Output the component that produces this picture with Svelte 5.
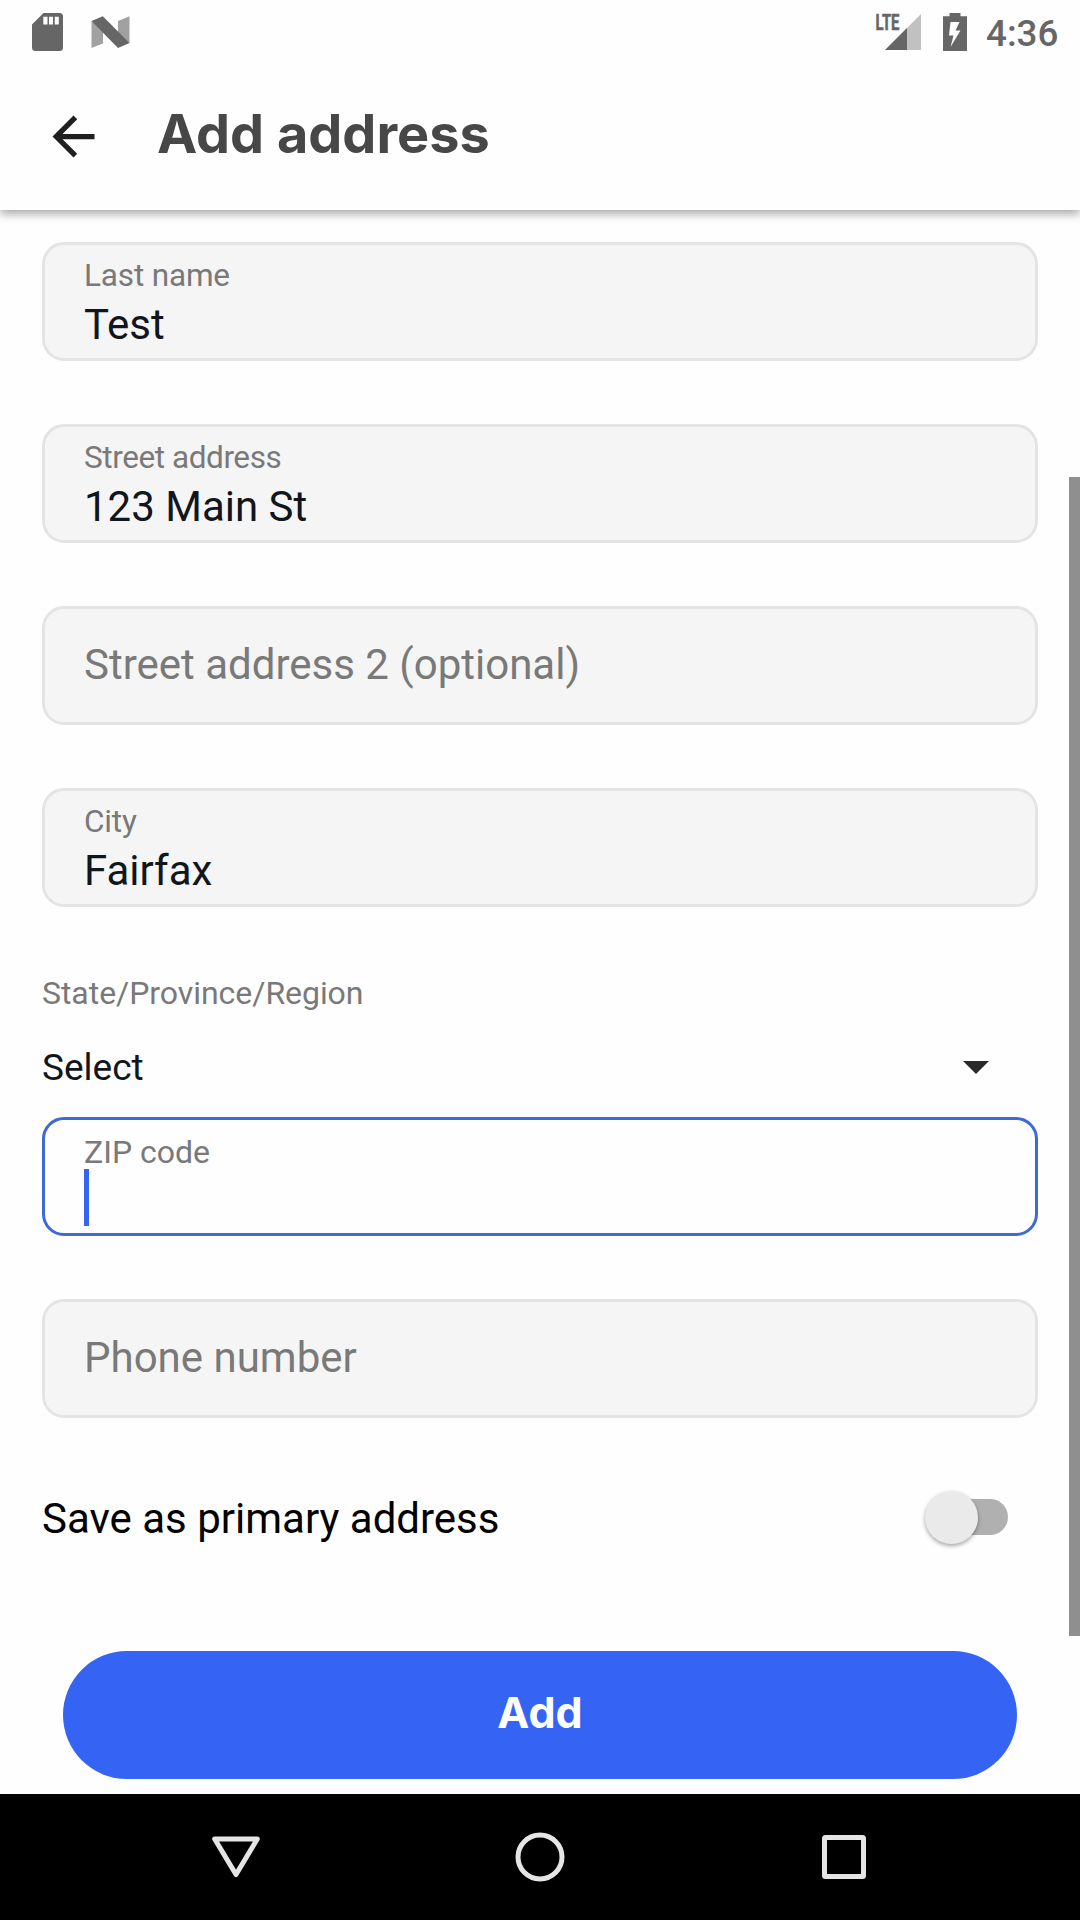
<script>
  const fields = [
    { label: 'Last name', value: 'Test' },
    { label: 'Street address', value: '123 Main St', tight: true },
    { label: 'Street address 2 (optional)', value: '' },
    { label: 'City', value: 'Fairfax' },
  ];
</script>

{#snippet field(item)}
  <div class="field">
    {#if item.value}
      <span class="label" class:tight={item.tight}>{item.label}</span>
      <span class="value">{item.value}</span>
    {:else}
      <span class="placeholder">{item.label}</span>
    {/if}
  </div>
{/snippet}

<div class="screen">
  <header>
    <div class="status">
      <svg class="sd" viewBox="0 0 31 38" width="31" height="38">
        <path fill="#666" fill-rule="evenodd" d="M11.5 0H27.5Q31 0 31 3.5V34.5Q31 38 27.5 38H3.5Q0 38 0 34.5V11.5ZM11.3 3.8V11.5H15.5V3.8ZM17 3.8V11.5H21V3.8ZM22.7 3.8V11.5H26.8V3.8Z" />
      </svg>
      <svg class="nougat" viewBox="0 0 39 32" width="39" height="32">
        <path fill="#a1a1a1" d="M.5 5V32L12 27.5V15ZM27 5L38.5.3V27L27 17Z" />
        <path fill="#666" d="M.5 5L11.8.3L38.5 27L27 32Z" />
      </svg>
      <span class="grow"></span>
      <svg class="signal" viewBox="0 -6 48 50" width="48" height="50">
        <path fill="#c1c1c1" d="M46 1V37H10Z" />
        <path fill="#666" d="M32 15V37H10Z" />
        <text x="0.5" y="16.5" textLength="24" lengthAdjust="spacingAndGlyphs">LTE</text>
      </svg>
      <svg class="battery" viewBox="0 0 24 38" width="24" height="38">
        <path fill="#666" fill-rule="evenodd" d="M6.5 0H17.5V3.3H24V38H0V3.3H6.5ZM7.5 9L6 22.5H10.5L7.5 34L17.5 17.5H12.5L16.5 9Z" />
      </svg>
      <span class="time">4:36</span>
    </div>
    <div class="bar">
      <svg viewBox="0 0 24 24" width="63" height="63">
        <path fill="#1f1f1f" d="M20 11H7.83l5.59-5.59L12 4l-8 8 8 8 1.41-1.41L7.83 13H20v-2z" />
      </svg>
      <h1>Add address</h1>
    </div>
  </header>

  <main>
    <div class="fields">
      {#each fields as item}
        {@render field(item)}
      {/each}
    </div>
    <div class="region">State/Province/Region</div>
    <div class="select">
      <span>Select</span>
      <svg viewBox="0 0 26 13" width="26" height="13"><path fill="#292929" d="M0 0H26L13 13Z" /></svg>
    </div>
    <div class="field focused">
      <span class="label">ZIP code</span>
      <span class="cursor"></span>
    </div>
    <div class="phone">{@render field({ label: 'Phone number', value: '' })}</div>
    <div class="primary">
      <span class="caption">Save as primary address</span>
      <span class="switch"><span class="thumb"></span></span>
    </div>
    <button>Add</button>
    <div class="scrollbar"></div>
  </main>

  <nav>
    <svg viewBox="0 0 50 50" width="50" height="50">
      <path d="M3.7 7H46.3L25 42.5Z" stroke-linejoin="round" />
    </svg>
    <svg viewBox="0 0 50 50" width="50" height="50"><circle cx="25" cy="25" r="22" /></svg>
    <svg viewBox="0 0 50 50" width="50" height="50">
      <rect x="5.5" y="5.5" width="39" height="39" rx="1" />
    </svg>
  </nav>
</div>

<style>
  :global(body) {
    margin: 0;
    background: #fefefe;
  }
  .screen {
    width: 1080px;
    height: 1920px;
    display: flex;
    flex-direction: column;
    overflow: hidden;
    background: #fefefe;
    font-family: Roboto, sans-serif;
  }
  .screen * {
    box-sizing: border-box;
  }
  svg {
    display: block;
    flex: none;
  }
  header {
    height: 210px;
    flex: none;
    background: #fefefe;
    box-shadow: 0 4px 9px rgba(0, 0, 0, 0.34);
    z-index: 1;
  }
  .status {
    height: 63px;
    display: flex;
    align-items: center;
    padding: 0 21px 0 32px;
  }
  .nougat {
    margin-left: 28px;
  }
  .grow {
    flex: 1;
  }
  .signal {
    margin-right: 20px;
  }
  .signal text {
    font: 700 21.5px Roboto, sans-serif;
    fill: #666;
    stroke: #666;
    stroke-width: 0.5px;
  }
  .time {
    margin-left: 19px;
    width: 73px;
    font-size: 36.75px;
    font-weight: 500;
    line-height: 43px;
    padding-top: 4px;
    color: #666;
  }
  .bar {
    height: 147px;
    display: flex;
    align-items: center;
    padding-left: 42px;
  }
  h1 {
    margin: 0 0 6px 52px;
    font: 700 54px/64px Inter, sans-serif;
    color: #474747;
  }
  main {
    position: relative;
    flex: 1;
    padding: 32px 42px 0;
  }
  .fields {
    display: flex;
    flex-direction: column;
    gap: 63px;
  }
  .field {
    height: 119px;
    display: flex;
    flex-direction: column;
    border: 3px solid #e4e4e4;
    border-radius: 22px;
    background: #f5f5f5;
    padding: 12px 39px 0;
  }
  .label {
    font-size: 31.5px;
    line-height: 37px;
    letter-spacing: -0.16px;
    color: #797979;
  }
  .label.tight {
    letter-spacing: -0.42px;
  }
  .value {
    margin-top: 6px;
    font-size: 42px;
    line-height: 49px;
    color: #11151c;
  }
  .placeholder {
    margin-top: 19px;
    font-size: 42px;
    line-height: 49px;
    color: #797979;
  }
  .region {
    margin-top: 68px;
    font-size: 32px;
    line-height: 37px;
    letter-spacing: -0.05px;
    color: #797979;
  }
  .select {
    height: 43px;
    margin: 34px 49px 28px 0;
    display: flex;
    justify-content: space-between;
    align-items: center;
    font-size: 37px;
    line-height: 43px;
    color: #11151c;
  }
  .focused {
    background: #fefefe;
    border-color: #3f68d8;
    padding-top: 14px;
  }
  .focused .label {
    font-size: 32px;
    letter-spacing: 0;
  }
  .cursor {
    width: 5px;
    height: 57px;
    margin-top: -2px;
    background: #3564f4;
  }
  .phone {
    margin-top: 63px;
  }
  .primary {
    height: 56px;
    margin: 71px 30px 0 0;
    display: flex;
    justify-content: space-between;
    align-items: center;
    font-size: 42px;
    line-height: 49px;
    color: #000;
  }
  .caption {
    padding-top: 2px;
  }
  .switch {
    width: 78px;
    height: 36px;
    border-radius: 18px;
    background: #b0b0b0;
    display: flex;
    align-items: center;
  }
  .thumb {
    flex: none;
    width: 53px;
    height: 53px;
    margin-left: -5px;
    border-radius: 50%;
    background: #eaeaea;
    box-shadow: 0 2px 4px rgba(0, 0, 0, 0.35);
  }
  button {
    display: block;
    width: 954px;
    height: 128px;
    margin: 106px 21px 0;
    padding: 0 0 6px;
    border: 0;
    border-radius: 64px;
    background: #3564f4;
    color: #fff;
    font: 700 43px/50px Inter, sans-serif;
  }
  .scrollbar {
    position: absolute;
    right: 0;
    top: 267px;
    width: 11px;
    height: 1159px;
    background: #8f8f8f;
  }
  nav {
    height: 126px;
    flex: none;
    display: flex;
    justify-content: center;
    align-items: center;
    gap: 254px;
    background: #000;
  }
  nav svg {
    fill: none;
    stroke: #e5e5e5;
    stroke-width: 5px;
  }
</style>
